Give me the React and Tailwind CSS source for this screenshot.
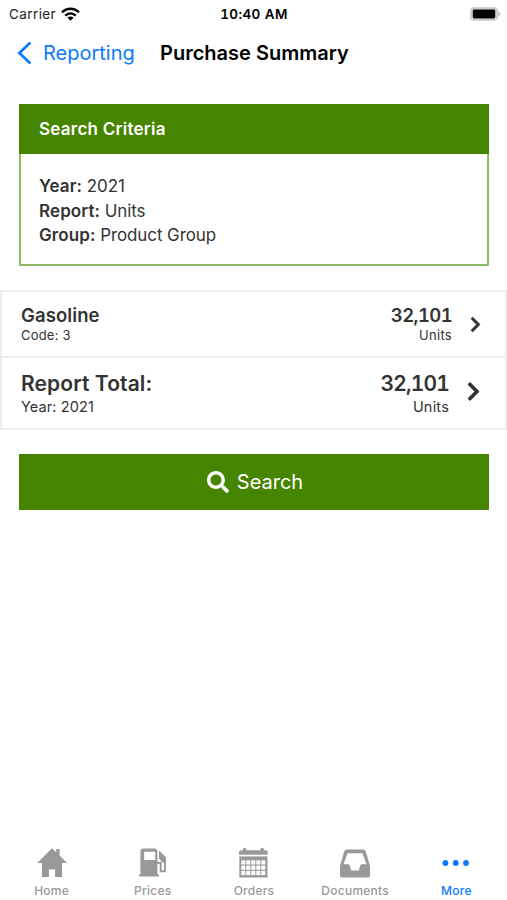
import { FaChevronRight, FaSearch } from 'react-icons/fa'

const criteria = [
  { label: 'Year:', value: '2021' },
  { label: 'Report:', value: 'Units' },
  { label: 'Group:', value: 'Product Group' },
]

function WifiIcon() {
  return (
    <svg width="19" height="14" viewBox="0 0 18 13" fill="none" stroke="#000" strokeWidth="2.4">
      <path d="M1 5C5.6 0.4 12.4 0.4 17 5" />
      <path d="M4 8.1C7 5.3 11 5.3 14 8.1" />
      <path d="M9 12.9L6.1 10.1C7.8 8.6 10.2 8.6 11.9 10.1Z" fill="#000" stroke="none" />
    </svg>
  )
}

function BatteryIcon() {
  return (
    <svg width="31" height="14" viewBox="0 0 31 14">
      <rect x="0.8" y="0.8" width="26.4" height="12.4" rx="3.4" fill="#d8d8d8" stroke="#c2c2c2" strokeWidth="1.2" />
      <rect x="2.8" y="2.6" width="22.4" height="8.8" rx="1.4" fill="#000" />
      <path d="M28.2 4.6C31 5.3 31 8.7 28.2 9.4Z" fill="#bdbdbd" />
    </svg>
  )
}

function HomeIcon() {
  return (
    <svg width="30" height="30" viewBox="0 0 30 30" fill="currentColor">
      <path d="M15 0.2L19.2 4.3V0.9H22.6V7.6L30 15H25V29H18.1V21.5H11.9V29H5V15H0Z" />
    </svg>
  )
}

function PumpIcon() {
  return (
    <svg width="28" height="30" viewBox="0 0 28 30" fill="currentColor">
      <path
        fillRule="evenodd"
        d="M4.3 0.6H15.2C17.2 0.6 18.4 1.8 18.4 3.8V26L20 27V28.5H0V27L1.4 26V3.8C1.4 1.8 2.4 0.6 4.3 0.6ZM5.2 3.8V12H16.2V5C16.2 4.2 15.8 3.8 15 3.8Z"
      />
      <path d="M18 14.8H21.7V23.3H25.9V10" fill="none" stroke="currentColor" strokeWidth="1.9" />
      <path d="M20 2.4L26.9 9.2V14.5H23.6L20 10.4Z" />
    </svg>
  )
}

function CalendarIcon() {
  const cells = [0, 1, 2, 3, 4].flatMap(col => [0, 1, 2].map(row => ({ col, row })))
  return (
    <svg width="29" height="30" viewBox="0 0 29 30" fill="currentColor">
      <path d="M1.8 2.2H4V1.2Q4 0 5.7 0T7.4 1.2V2.2H21.4V1.2Q21.4 0 23.1 0T24.8 1.2V2.2H27Q28.7 2.2 28.7 4V6.7H0V4Q0 2.2 1.8 2.2Z" />
      <path d="M0.3 8.4H28.5V29.5H0.3Z" />
      {cells.map(c => (
        <rect key={`${c.col}-${c.row}`} x={2.3 + c.col * 5} y={12.3 + c.row * 5.3} width="4" height="4.2" fill="#fff" />
      ))}
    </svg>
  )
}

function InboxIcon() {
  return (
    <svg width="30" height="29" viewBox="0 0 30 29" fill="currentColor">
      <path
        fillRule="evenodd"
        d="M6.5 0.4H23.5Q25.2 0.4 25.6 2L30 17V26.5Q30 28.5 28 28.5H2Q0 28.5 0 26.5V17L4.4 2Q4.8 0.4 6.5 0.4ZM7.6 4.2L3.5 15.3H8.2Q9.3 15.3 9.7 16.5L11.2 21.4H18.8L20.3 16.5Q20.7 15.3 21.8 15.3H26.5L22.4 4.2Z"
      />
    </svg>
  )
}

function MoreIcon() {
  return (
    <svg width="28" height="6" viewBox="0 0 28 6" fill="currentColor">
      <circle cx="3.4" cy="3" r="2.9" />
      <circle cx="13.8" cy="3" r="2.9" />
      <circle cx="24" cy="3" r="2.9" />
    </svg>
  )
}

const tabs = [
  { label: 'Home', icon: HomeIcon },
  { label: 'Prices', icon: PumpIcon },
  { label: 'Orders', icon: CalendarIcon },
  { label: 'Documents', icon: InboxIcon },
  { label: 'More', icon: MoreIcon, active: true },
]

function StatusBar() {
  return (
    <div className="grid h-7 grid-cols-3 items-center pr-[6px] pl-[9px] text-black">
      <div className="flex items-center gap-[5px]">
        <span className="text-[13.5px] tracking-[0.4px] text-[#222]">Carrier</span>
        <WifiIcon />
      </div>
      <span className="pr-[2px] text-center text-[13.5px] font-semibold tracking-[0.4px] tabular-nums">10:40 AM</span>
      <div className="flex justify-end">
        <BatteryIcon />
      </div>
    </div>
  )
}

function NavBar() {
  return (
    <div className="flex h-[49px] items-center pl-[17px]">
      <svg width="16" height="24" viewBox="0 0 16 24" fill="none" stroke="#0a7aff" strokeWidth="2.7">
        <path d="M13.4 1.6L2.4 12L13.4 22.4" />
      </svg>
      <span className="ml-[10px] w-[117px] text-[20px] text-[#0a7aff]">Reporting</span>
      <h1 className="text-[20px] font-semibold text-black">Purchase Summary</h1>
    </div>
  )
}

export default function App() {
  return (
    <div className="flex h-[900px] w-[507px] flex-col overflow-hidden bg-white font-['Inter',sans-serif] whitespace-nowrap text-[#333]">
      <StatusBar />
      <NavBar />

      <section className="mt-[27px] mr-[18px] ml-[19px]">
        <h2 className="flex h-[50px] items-center bg-[#468500] pt-[2px] pl-5 text-[17px] font-semibold tracking-[0.25px] text-white">Search Criteria</h2>
        <div className="h-[112px] border-2 border-t-0 border-[#8fbb66] pt-5 pl-[18px] text-[17px] leading-[24.5px]">
          {criteria.map(c => (
            <p key={c.label} className="tracking-[-0.1px]">
              <b className="font-semibold tracking-[0.1px]">{c.label}</b> {c.value}
            </p>
          ))}
        </div>
      </section>

      <div className="mt-6 border-2 border-[#ececec]">
        <div className="flex h-[64px] items-center pr-[21px] pl-[19px]">
          <div className="flex-1">
            <p className="text-[18.5px] leading-[23px] font-semibold tracking-[0.1px]">Gasoline</p>
            <p className="text-[13px] leading-[17px] tracking-[0.2px]">Code: 3</p>
          </div>
          <div className="text-right">
            <p className="text-[18.5px] leading-[23px] font-semibold tracking-[-0.6px] tabular-nums">32,101</p>
            <p className="text-[13px] leading-[17px] tracking-[0.3px]">Units</p>
          </div>
          <FaChevronRight className="ml-[15px] size-[17px]" stroke="currentColor" strokeWidth="14" />
        </div>
        <div className="flex h-[72px] items-center border-t-2 border-[#ececec] pr-[21px] pl-[19px]">
          <div className="flex-1">
            <p className="text-[21px] leading-[27px] font-semibold tracking-[0.1px]">Report Total:</p>
            <p className="text-[14.5px] leading-[20px] tracking-[0.1px]">Year: 2021</p>
          </div>
          <div className="text-right">
            <p className="text-[21px] leading-[27px] font-semibold tracking-[-0.85px] tabular-nums">32,101</p>
            <p className="text-[14.5px] leading-[20px] tracking-[0.2px]">Units</p>
          </div>
          <FaChevronRight className="mb-[3px] ml-[14px] size-[21px]" stroke="currentColor" strokeWidth="10" />
        </div>
      </div>

      <button className="mt-6 mr-[18px] ml-[19px] flex h-14 items-center justify-center gap-2 bg-[#468500] pl-[2px] text-[20px] text-white">
        <FaSearch className="size-[22px]" />
        Search
      </button>

      <nav className="mt-auto grid h-[54px] grid-cols-5 pl-px text-[#999]">
        {tabs.map(({ label, icon: Icon, active }) => (
          <div key={label} className={`flex flex-col items-center ${active ? 'text-[#0a7aff]' : ''}`}>
            <div className="flex h-[34px] items-center">
              <Icon />
            </div>
            <span className="text-[12px] leading-[22px] font-medium tracking-[0.25px]">{label}</span>
          </div>
        ))}
      </nav>
    </div>
  )
}
